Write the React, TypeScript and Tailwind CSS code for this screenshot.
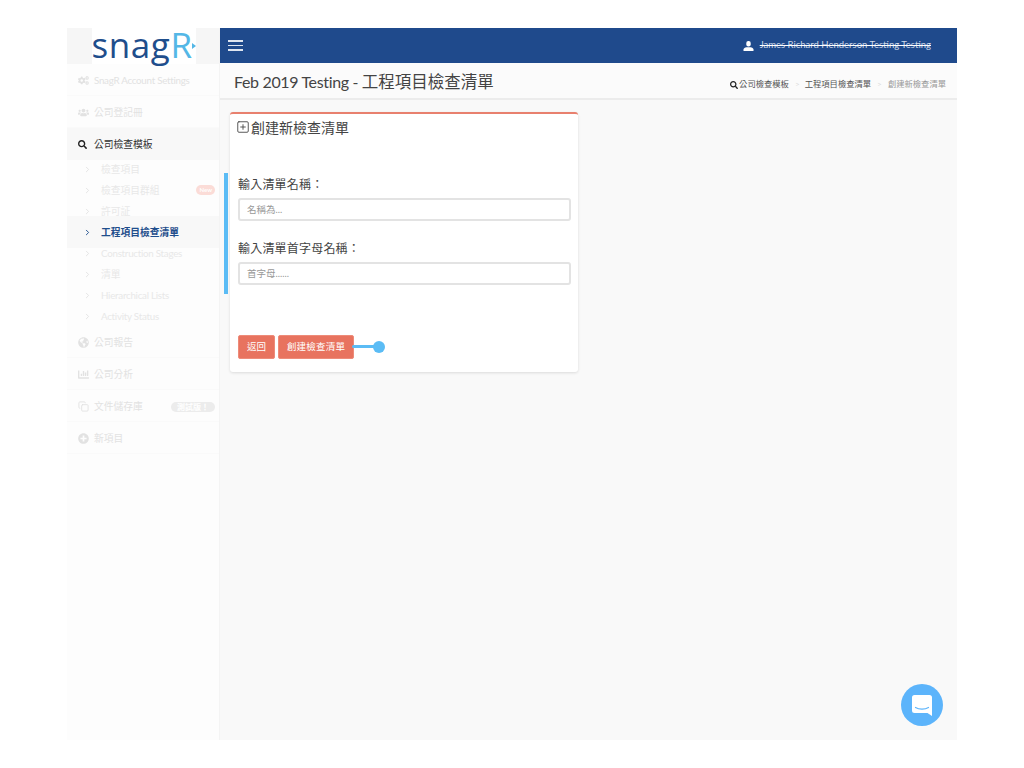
import { ChevronRight, Copy, SquarePlus } from "lucide-react";
import { FaChartBar, FaCogs, FaGlobeAmericas, FaPlusCircle, FaSearch, FaUsers } from "react-icons/fa";

const font = { fontFamily: 'Lato, "Noto Sans CJK TC", sans-serif' };

function MenuRow({ icon, label, badge, tight }: { icon: React.ReactNode; label: string; badge?: React.ReactNode; tight?: boolean }) {
  return (
    <div className="flex h-[32px] items-center border-b border-[#fafafa] pl-[11px] pr-[4px] pt-[2px] text-[9.75px] text-[#e2e2e2]">
      <span className="flex w-[16px] justify-start text-[11px] text-[#e2e2e2]">{icon}</span>
      <span className={tight ? "tracking-[-0.25px]" : ""}>{label}</span>
      {badge && <span className="ml-auto">{badge}</span>}
    </div>
  );
}

function SubRow({ label, badge, tight }: { label: string; badge?: boolean; tight?: boolean }) {
  return (
    <div className="flex h-[21px] items-center pl-[16px] pr-[4px] text-[9.75px] text-[#e8e8e8]">
      <ChevronRight size={9} className="mr-[9px] text-[#dcdcdc]" strokeWidth={2} />
      <span className={tight ? "tracking-[-0.25px]" : ""}>{label}</span>
      {badge && <span className="ml-auto -mt-[2px] rounded-full bg-[#fbdcd7] px-[3px] text-[6px] font-bold leading-[10px] text-white">New</span>}
    </div>
  );
}

function Sidebar() {
  return (
    <aside className="flex w-[153px] shrink-0 flex-col border-r border-[#f4f4f4] bg-[#fdfdfd]">
      <div className="flex h-[36px] bg-[#f6f6f6]">
        <div className="relative ml-[25px] flex h-[36px] w-[104px] items-center justify-center bg-white">
          <span className="-ml-[4px] -mt-[3px] text-[35px] font-medium leading-[36px] tracking-[0.6px] text-[#1f4e8c]" style={{ fontFamily: '"Open Sans", sans-serif' }}>snag<span className="text-[#54b7e6]">R</span></span>
          <svg className="absolute right-0 top-[15px]" width="4" height="6" viewBox="0 0 4 6"><path d="M0 0 4 3 0 6Z" fill="#54b7e6" /></svg>
        </div>
      </div>
      <MenuRow icon={<FaCogs />} label="SnagR Account Settings" tight />
      <MenuRow icon={<FaUsers />} label="公司登記冊" />
      <div className="flex h-[32px] items-center bg-[#f8f8f8] pl-[11px] text-[9.75px] text-[#333]">
        <span className="w-[16px] text-[9px] text-[#222]"><FaSearch /></span>
        <span>公司檢查模板</span>
      </div>
      <div className="-mt-[1px] flex flex-col">
        <SubRow label="檢查項目" />
        <SubRow label="檢查項目群組" badge />
        <SubRow label="許可証" />
        <div className="relative -mb-[5px] -mt-[6px] flex h-[32px] items-center bg-[#f8f8f8] pl-[16px] text-[9.75px] font-bold text-[#1f4e8c]">
          <ChevronRight size={9} className="mr-[9px]" strokeWidth={2.5} />
          <span>工程項目檢查清單</span>
        </div>
        <SubRow label="Construction Stages" tight />
        <SubRow label="清單" />
        <SubRow label="Hierarchical Lists" tight />
        <SubRow label="Activity Status" tight />
      </div>
      <div className="-mt-[1px]">
        <MenuRow icon={<FaGlobeAmericas />} label="公司報告" />
        <MenuRow icon={<FaChartBar />} label="公司分析" />
        <MenuRow
          icon={<Copy size={11} />}
          label="文件儲存庫"
          badge={<span className="rounded-full bg-[#ececec] px-[6px] text-[8px] font-bold leading-[13px] text-white">測試版！</span>}
        />
        <MenuRow icon={<FaPlusCircle />} label="新項目" />
      </div>
    </aside>
  );
}

function Field({ label, placeholder }: { label: string; placeholder: string }) {
  return (
    <div className="flex flex-col">
      <label className="mb-[3px] text-[12px] leading-[20px] tracking-[0.2px] text-[#444]">{label}</label>
      <input
        placeholder={placeholder}
        className="h-[23px] w-[333px] rounded-[3px] border-2 border-[#e3e3e3] bg-white px-[7px] text-[9.5px] outline-none placeholder:text-[#999]"
      />
    </div>
  );
}

export default function App() {
  return (
    <div className="min-h-[768px] bg-white pl-[67px] pt-[28px]" style={font}>
      <div className="relative flex h-[712px] w-[890px]">
        <Sidebar />
        <main className="flex flex-1 flex-col bg-[#f9f9f9]">
          <header className="flex h-[35px] items-center justify-between bg-[#1f4a8c] pl-[8px] pr-[26px] text-white">
            <div className="flex flex-col gap-[3px]">
              <span className="h-[1.5px] w-[15px] bg-[#dfe6f0]" />
              <span className="h-[1.5px] w-[15px] bg-[#dfe6f0]" />
              <span className="h-[1.5px] w-[15px] bg-[#dfe6f0]" />
            </div>
            <div className="flex items-center gap-[6px] text-[9.5px] text-[#cfd9e8]">
              <svg width="11" height="10" viewBox="0 0 11 10">
                <rect x="3.300" y="0" width="4.400" height="5.500" rx="2" fill="#fff" />
                <path d="M0.500 10V8.500C0.500 7.300 2 6.600 3.500 6.300h4C9 6.600 10.500 7.300 10.500 8.500V10Z" fill="#fff" />
              </svg>
              <span className="line-through decoration-white">James Richard Henderson Testing Testing</span>
            </div>
          </header>
          <div className="flex h-[37px] items-center justify-between border-b-2 border-[#ececec] bg-[#fbfbfb] pl-[14px] pr-[11px] pt-[3px]">
            <h1 className="text-[16.5px] text-[#444]">
              <span className="text-[16px] tracking-[-0.35px]">Feb 2019 Testing - </span>工程項目檢查清單
            </h1>
            <div className="flex items-center pt-[5px] text-[8.3px] text-[#555]">
              <FaSearch size={8} className="mr-[1px] text-[#222]" />
              <span>公司檢查模板</span>
              <span className="ml-[6px] mr-[5px] text-[#ddd]">&gt;</span>
              <span>工程項目檢查清單</span>
              <span className="mx-[6px] text-[#ddd]">&gt;</span>
              <span className="text-[#999]">創建新檢查清單</span>
            </div>
          </div>
          <div className="pl-[10px] pt-[12px]">
            <section className="flex h-[260px] w-[348px] flex-col rounded-[3px] border-t-2 border-[#e8806e] bg-white pl-[7px] shadow-[0_1px_3px_rgba(0,0,0,0.12)]">
              <div className="-mt-[1px] flex h-[28px] items-center gap-[1px] text-[14px] text-[#444]">
                <SquarePlus size={14} strokeWidth={1.5} className="-ml-[1px]" />
                <span>創建新檢查清單</span>
              </div>
              <div className="mt-[34px] flex flex-col gap-[18px] pl-[1px]">
                <Field label="輸入清單名稱：" placeholder="名稱為..." />
                <Field label="輸入清單首字母名稱：" placeholder="首字母......" />
              </div>
              <div className="mt-[50px] flex gap-[3px] pl-[1px]">
                <button className="h-[24px] w-[37px] rounded-[2px] border border-[#ee8b79] bg-[#e8735f] text-[9.5px] text-white">返回</button>
                <button className="h-[24px] w-[76px] rounded-[2px] border border-[#ee8b79] bg-[#e8735f] text-[9.5px] tracking-[0.2px] text-white">創建檢查清單</button>
              </div>
            </section>
          </div>
        </main>
        {/* tour highlight + pointer */}
        <div className="absolute left-[157px] top-[145px] h-[121px] w-[4px] bg-[#5bbcf5]" />
        <div className="absolute left-[285px] top-[317px] h-[3px] w-[25px] rounded-full bg-[#5bbcf5]" />
        <div className="absolute left-[306px] top-[313px] h-[12px] w-[12px] rounded-full bg-[#5bbcf5]" />
        <button className="absolute left-[834px] top-[656px] flex h-[42px] w-[42px] items-center justify-center rounded-full bg-[#5cb4fb]">
          <svg width="20" height="21" viewBox="0 0 20 21">
            <path d="M2.500 0h15A2.500 2.500 0 0 1 20 2.500V21l-4.500-3H2.500A2.500 2.500 0 0 1 0 15.500v-13A2.500 2.500 0 0 1 2.500 0Z" fill="#fff" />
            <path d="M3.500 12.500c3.500 2.200 9.500 2.200 13 0" fill="none" stroke="#5cb4fb" strokeWidth="1.200" strokeLinecap="round" />
          </svg>
        </button>
      </div>
    </div>
  );
}
